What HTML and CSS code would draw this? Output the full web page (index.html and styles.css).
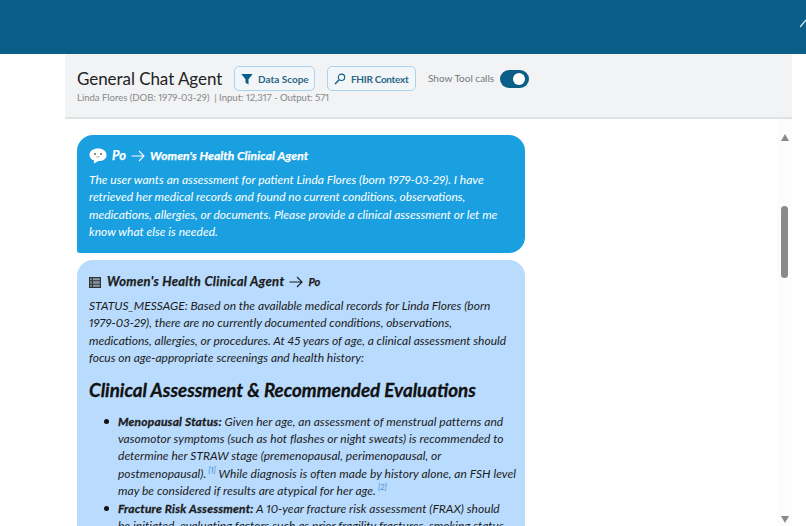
FILE: index.html
```html
<!DOCTYPE html>
<html lang="en">
<head>
<meta charset="utf-8">
<title>General Chat Agent</title>
<link rel="stylesheet" href="styles.css">
</head>
<body>
<header class="topbar"><svg class="corner" width="6" height="10" viewBox="0 0 6 10"><path d="M0 8 L6 1" stroke="#cfe6f2" stroke-width="1.4" fill="none"/></svg></header>
<div class="page">
  <section class="head">
    <div class="head-row">
      <h1>General Chat Agent</h1>
      <button class="btn btn-scope"><svg width="12" height="12" viewBox="0 0 12 12"><path d="M0.3 1 H11.7 L7.5 6.2 V11.5 L4.5 9.8 V6.2 Z" fill="#0b5e87"/></svg>Data Scope</button>
      <button class="btn btn-fhir"><svg width="12" height="12" viewBox="0 0 12 12"><circle cx="7.5" cy="4.3" r="3.2" fill="none" stroke="#0b5e87" stroke-width="1.1"/><path d="M5.2 6.7 L1 11" stroke="#0b5e87" stroke-width="1.4"/></svg>FHIR Context</button>
      <span class="tool-label">Show Tool calls</span>
      <span class="toggle"><span class="knob"></span></span>
    </div>
    <div class="meta">Linda Flores (DOB: 1979-03-29) &nbsp;| Input: 12,317 - Output: 571</div>
  </section>
  <div class="chat-wrap">
    <main class="chat">
      <article class="msg msg-user">
        <div class="msg-head">
          <svg class="bubble" width="18" height="16" viewBox="0 0 18 16"><path d="M9 0.5 C14 0.5 17.5 3 17.5 7 C17.5 11 14 13 9.5 13 C8 13.6 6.5 15 4.6 15.5 C5 14.5 5.3 13.5 5.2 12.5 C2.4 11.6 0.5 9.6 0.5 7 C0.5 3 4 0.5 9 0.5 Z" fill="#fff"/><circle cx="6" cy="6" r="0.9" fill="#555"/><circle cx="12" cy="6" r="0.9" fill="#555"/><path d="M7.5 8.6 Q9 9.8 10.5 8.6" stroke="#777" stroke-width="0.7" fill="none"/></svg>
          <span class="from">Po</span>
          <svg class="arrow" width="14" height="12" viewBox="0 0 14 12"><path d="M0.5 6 H13 M8 1 L13 6 L8 11" fill="none" stroke="currentColor" stroke-width="1.1"/></svg>
          <span class="to">Women's Health Clinical Agent</span>
        </div>
        <p>The user wants an assessment for patient Linda Flores (born 1979-03-29). I have retrieved her medical records and found no current conditions, observations, medications, allergies, or documents. Please provide a clinical assessment or let me know what else is needed.</p>
      </article>
      <article class="msg msg-agent">
        <div class="msg-head">
          <svg class="table-icon" width="12" height="11" viewBox="0 0 12 11"><rect x="0.6" y="0.6" width="10.8" height="9.8" fill="#8c9aa8" stroke="#333" stroke-width="1.2"/><path d="M0.5 3.8 H11.5 M0.5 7.2 H11.5 M3.4 0.5 V10.5" stroke="#333" stroke-width="1.1"/></svg>
          <span class="from-agent">Women's Health Clinical Agent</span>
          <svg class="arrow" width="14" height="12" viewBox="0 0 14 12"><path d="M0.5 6 H13 M8 1 L13 6 L8 11" fill="none" stroke="currentColor" stroke-width="1.1"/></svg>
          <span class="to-agent">Po</span>
        </div>
        <p>STATUS_MESSAGE: Based on the available medical records for Linda Flores (born 1979-03-29), there are no currently documented conditions, observations, medications, allergies, or procedures. At 45 years of age, a clinical assessment should focus on age-appropriate screenings and health history:</p>
        <h2>Clinical Assessment &amp; Recommended Evaluations</h2>
        <ul>
          <li><strong>Menopausal Status:</strong> Given her age, an assessment of menstrual patterns and vasomotor symptoms (such as hot flashes or night sweats) is recommended to determine her STRAW stage (premenopausal, perimenopausal, or postmenopausal).<sup>[1]</sup> While diagnosis is often made by history alone, an FSH level may be considered if results are atypical for her age.<sup>[2]</sup></li>
          <li><strong>Fracture Risk Assessment:</strong> A 10-year fracture risk assessment (FRAX) should<br>be initiated, evaluating factors such as prior fragility fractures, smoking status,</li>
        </ul>
      </article>
    </main>
    <div class="scrollbar">
      <span class="tri-up"></span>
      <span class="thumb"></span>
      <span class="tri-down"></span>
    </div>
  </div>
</div>
</body>
</html>
```
FILE: styles.css
```css
html, body { margin: 0; padding: 0; height: 526px; overflow: hidden; background: #fff; }
body { font-family: "Lato", "Noto Sans", sans-serif; color: #1c1c1c; font-variant-numeric: proportional-nums; }
.topbar { height: 54px; background: #0b5e87; position: relative; }
.corner { position: absolute; right: 0; top: 19px; }
.page { margin-left: 65px; width: 727px; }
.head { background: #f1f3f5; border-bottom: 2px solid #dfe1e3; padding: 0 12px; box-sizing: border-box; height: 65px; }
.head-row { display: flex; align-items: center; padding-top: 12px; height: 25px; }
h1 { margin: 0 0 1px; font-size: 17px; font-weight: 400; color: #222; width: 157px; white-space: nowrap; letter-spacing: -0.06px; }
.btn { display: flex; align-items: center; gap: 5px; height: 25px; box-sizing: border-box; background: #f3f6f9; border: 1px solid #a9d3f0; border-radius: 5px; font: 700 10px "Lato", sans-serif; color: #2b6685; padding: 0 6px; white-space: nowrap; flex: none; }
.btn svg { flex: none; }
.btn-scope { width: 81px; margin-right: 12px; }
.btn-fhir { width: 89px; margin-right: 12px; letter-spacing: -0.3px; }
.tool-label { font-size: 10px; color: #777; margin-right: 6px; margin-bottom: 1px; white-space: nowrap; }
.toggle { width: 29px; height: 18px; border-radius: 9px; background: #0b5e87; position: relative; display: block; flex: none; }
.knob { position: absolute; right: 4px; top: 3px; width: 12px; height: 12px; border-radius: 50%; background: #fff; }
.meta { font-size: 9.6px; color: #888; margin-top: 1px; white-space: nowrap; letter-spacing: -0.03px; }
.chat-wrap { display: flex; height: 407px; overflow: hidden; }
.chat { width: 448px; margin-left: 12px; padding-top: 16px; display: flex; flex-direction: column; gap: 7px; }
.msg { border-radius: 16px; padding: 12px 12px 10px; font-style: italic; font-size: 12px; line-height: 17.4px; }
.msg p { margin: 0; }
.msg-user { background: #1a9fe0; color: #fff; border-bottom-left-radius: 3px; height: 118px; box-sizing: border-box; flex: none; }
.msg-agent { background: #b9dbfd; color: #1c1c1c; flex: none; padding-top: 13px; }
.msg-head { display: flex; align-items: center; gap: 5px; height: 18px; margin-bottom: 6px; font-weight: 700; font-size: 12px; white-space: nowrap; -webkit-text-stroke: 0.25px currentColor; }
.msg-head svg { flex: none; }
.msg-user .to { letter-spacing: 0.1px; }
.msg-agent .msg-head { font-size: 13px; margin-bottom: 6px; }
.from-agent { letter-spacing: 0.32px; margin-left: 1px; }
.from { font-size: 13px; }
.to-agent { font-size: 11px; }
h2 { margin: 11px 0 11px; font-size: 18.75px; line-height: 24px; font-weight: 700; font-style: italic; color: #111; white-space: nowrap; -webkit-text-stroke: 0.3px currentColor; }
ul { margin: 0 -4px 0 0; padding-left: 29px; letter-spacing: 0.03px; list-style: none; }
li { position: relative; }
li::before { content: ""; position: absolute; left: -14px; top: 6px; width: 5px; height: 5px; border-radius: 50%; background: #111; }
strong { font-weight: 700; -webkit-text-stroke: 0.3px currentColor; letter-spacing: 0.2px; }
sup { font-size: 8px; line-height: 0; color: #3a8fd0; vertical-align: 5px; margin-left: 2px; }
.scrollbar { width: 15px; margin-left: 252px; background: #fcfcfc; position: relative; }
.tri-up, .tri-down { position: absolute; left: 3.5px; width: 0; height: 0; border-left: 4.5px solid transparent; border-right: 4.5px solid transparent; }
.tri-up { top: 15px; border-bottom: 7px solid #8a8a8a; }
.tri-down { bottom: 3px; border-top: 7px solid #8a8a8a; }
.thumb { position: absolute; left: 4px; top: 87px; width: 7px; height: 72px; border-radius: 4px; background: #8a8a8a; }
```
